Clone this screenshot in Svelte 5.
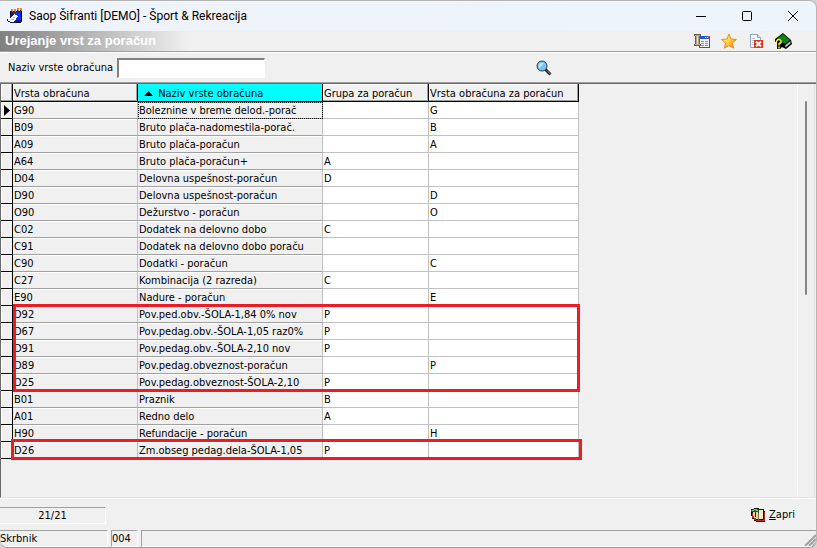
<script lang="ts">
  type Row = [string, string, string, string];

  const groups: { mark: string; rows: Row[] }[] = [
    {
      mark: '',
      rows: [
        ['G90', 'Boleznine v breme delod.-porač', '', 'G'],
        ['B09', 'Bruto plača-nadomestila-porač.', '', 'B'],
        ['A09', 'Bruto plača-poračun', '', 'A'],
        ['A64', 'Bruto plača-poračun+', 'A', ''],
        ['D04', 'Delovna uspešnost-poračun', 'D', ''],
        ['D90', 'Delovna uspešnost-poračun', '', 'D'],
        ['O90', 'Dežurstvo - poračun', '', 'O'],
        ['C02', 'Dodatek na delovno dobo', 'C', ''],
        ['C91', 'Dodatek na delovno dobo poraču', '', ''],
        ['C90', 'Dodatki - poračun', '', 'C'],
        ['C27', 'Kombinacija (2 razreda)', 'C', ''],
        ['E90', 'Nadure - poračun', '', 'E']
      ]
    },
    {
      mark: 'marked',
      rows: [
        ['D92', 'Pov.ped.obv.-ŠOLA-1,84 0% nov', 'P', ''],
        ['D67', 'Pov.pedag.obv.-ŠOLA-1,05 raz0%', 'P', ''],
        ['D91', 'Pov.pedag.obv.-ŠOLA-2,10 nov', 'P', ''],
        ['D89', 'Pov.pedag.obveznost-poračun', '', 'P'],
        ['D25', 'Pov.pedag.obveznost-ŠOLA-2,10', 'P', '']
      ]
    },
    {
      mark: '',
      rows: [
        ['B01', 'Praznik', 'B', ''],
        ['A01', 'Redno delo', 'A', ''],
        ['H90', 'Refundacije - poračun', '', 'H']
      ]
    },
    {
      mark: 'marked wide',
      rows: [['D26', 'Zm.obseg pedag.dela-ŠOLA-1,05', 'P', '']]
    }
  ];

  let query = $state('');
  let selected = $state('G90');
</script>

<div class="window">
  <header class="titlebar">
    <svg width="16" height="16" viewBox="0 0 16 16" shape-rendering="crispEdges">
      <path d="M3 3h12v11H10v1H5v-2H3z" fill="#0a1a9c" />
      <path d="M6 4h8v8H8V8H6z" fill="#1030e8" />
      <path d="M14 2h1v11h-1zM3 4h1v3H3zM9 14h5v1H9z" fill="#000" />
      <path d="M4 1h2v3H4zM7 1h2v3H7zM10 0h2v3h-2zM13 0h2v3h-2z" fill="#e88420" />
      <path d="M4 3h1v2H4zM7 3h1v2H7zM10 2h1v2h-1zM13 2h1v2h-1z" fill="#402000" />
      <path d="M0 11l3-1 4-4 4 2-3 5-5 2-3-2z" fill="#fff" />
      <path d="M0 11h1v2H0zM1 13h2v1H1zM3 14h2v1H3zM6 6h1v1H6zM4 8h1v1H4z" fill="#222" />
      <path d="M4 11h3v1H4zM6 9h2v1H6z" fill="#a8b8d0" />
    </svg>
    <h1>Saop Šifranti [DEMO] - Šport &amp; Rekreacija</h1>
    <div class="caption">
      <button aria-label="Minimize">
        <svg width="12" height="12" viewBox="0 0 12 12"><path d="M1 6.500h10" /></svg>
      </button>
      <button aria-label="Maximize">
        <svg width="12" height="12" viewBox="0 0 12 12"><rect x="1.500" y="1.500" width="9" height="9" rx="1" /></svg>
      </button>
      <button aria-label="Close">
        <svg width="12" height="12" viewBox="0 0 12 12"><path d="M1 1l10 10M11 1L1 11" /></svg>
      </button>
    </div>
  </header>

  <div class="heading">
    <h2>Urejanje vrst za poračun</h2>
    <div class="tools">
      <button aria-label="Form settings">
        <svg width="16" height="16" viewBox="0 0 16 16" shape-rendering="crispEdges">
          <path d="M5 3h11v12H5z" fill="#2454e0" />
          <path d="M6 6h9v8H6z" fill="#f4f6fc" />
          <path d="M11 4h1v1h-1zM13 4h1v1h-1z" fill="#fff" />
          <path d="M14 3h1v2h-1z" fill="#e05030" />
          <path d="M7 8h3v1H7zM11 8h3v1h-3zM7 10h3v1H7zM11 10h3v1h-3zM7 12h3v1H7zM11 12h3v1h-3z" fill="#8090a8" />
          <path d="M0 1h7v2H6v8h1v2H0v-2h1V3H0z" fill="#6c6048" />
          <path d="M1 2h5v1H1zM2 3h3v8H2zM1 11h5v1H1z" fill="#b8a888" />
          <path d="M3 3h1v8H3z" fill="#e8dcc0" />
        </svg>
      </button>
      <button aria-label="Favourites">
        <svg width="16" height="16" viewBox="0 0 16 16">
          <defs>
            <linearGradient id="star" x1="0" y1="0" x2="1" y2="1">
              <stop offset="0" stop-color="#fff8a0" />
              <stop offset="0.5" stop-color="#ffcf38" />
              <stop offset="1" stop-color="#f07a10" />
            </linearGradient>
          </defs>
          <path d="M8 1l2 5 5.400.500-4 3.700 1.200 5L8 12.500l-4.600 2.700 1.200-5-4-3.700L6 6z" fill="url(#star)" stroke="#e48a2c" />
        </svg>
      </button>
      <button aria-label="Close document">
        <svg width="16" height="16" viewBox="0 0 16 16">
          <path d="M2.500 1.500h7l3 3v10h-10z" fill="#f4f8ff" stroke="#8ea4cc" />
          <path d="M9.500 1.500v3h3" fill="#d4e0f4" stroke="#8ea4cc" />
          <path d="M4 5.500h3M4 7.500h2M4 9.500h1M4 11.500h1" stroke="#b4c6e4" />
          <path d="M6 7h9v8H6z" fill="#d83418" />
          <path d="M8 8.500l5 5M13 8.500l-5 5" stroke="#fff" stroke-width="2" />
        </svg>
      </button>
      <button aria-label="Help">
        <svg width="17" height="16" viewBox="0 0 17 16">
          <path d="M0 6l8-6 8 7 1 4-6 5-4-2-2 2H2V9H0z" fill="#000" />
          <path d="M2 6l6-5 7 6-5 4z" fill="#0a8414" />
          <path d="M10 12.500l5.500-4.500v2.500L10.500 14.500z" fill="#bcbcbc" />
          <path d="M1.500 9.500V8L3 6.500h1.500L6 8v1.500L4 11v1.500M4 13.500v2" fill="none" stroke="#f8ec10" stroke-width="1.600" />
        </svg>
      </button>
    </div>
  </div>

  <form class="search" onsubmit={(e) => e.preventDefault()}>
    <label for="query">Naziv vrste obračuna</label>
    <input id="query" type="text" bind:value={query} />
    <button aria-label="Search">
      <svg width="16" height="16" viewBox="0 0 16 16">
        <path d="M9.500 9.500l5 5" stroke="#222" stroke-width="3" />
        <path d="M11 10.500l3.500 3.500" stroke="#8c8c8c" />
        <circle cx="6" cy="6" r="5" fill="#7cc4ec" stroke="#24445c" />
        <path d="M3 6a3 3 0 0 1 3-3h2L3 8z" fill="#c8ecfc" />
      </svg>
    </button>
  </form>

  <main class="grid">
    <div class="rows">
      <table>
        <colgroup>
          <col class="c-mark" /><col class="c-code" /><col class="c-name" /><col class="c-group" /><col class="c-type" />
        </colgroup>
        <thead>
          <tr>
            <th></th>
            <th>Vrsta obračuna</th>
            <th class="sorted">
              <svg width="9" height="5" viewBox="0 0 9 5"><path d="M0 5l4.500-5L9 5z" /></svg>
              Naziv vrste obračuna
            </th>
            <th>Grupa za poračun</th>
            <th>Vrsta obračuna za poračun</th>
          </tr>
        </thead>
        {#each groups as group}
          <tbody class={group.mark}>
            {#each group.rows as [code, name, grp, type]}
              <tr class:selected={selected === code} onclick={() => (selected = code)}>
                <td class="indicator">
                  {#if selected === code}
                    <svg width="6" height="11" viewBox="0 0 6 11"><path d="M0 0l6 5.500L0 11z" /></svg>
                  {/if}
                </td>
                <td class="fixed">{code}</td>
                <td class="fixed name">{name}</td>
                <td>{grp}</td>
                <td>{type}</td>
              </tr>
            {/each}
          </tbody>
        {/each}
      </table>
    </div>
    <div class="scroll"><div class="thumb"></div></div>
  </main>

  <div class="actions">
    <div class="count">21/21</div>
    <button class="close">
      <svg width="16" height="16" viewBox="0 0 16 16" shape-rendering="crispEdges">
        <path d="M1 2h3V1h5v1h5v2h1v11H6v-1H4v-2H2V9H1z" fill="#1c0c08" />
        <path d="M2 6h2v5h2v2h8V5h1v9H6v-1H4v-2H2z" fill="#b03028" />
        <path d="M3 5h5v7H6v-1H4V9H3z" fill="#e0d49c" />
        <path d="M9 3h4v9H9z" fill="#f4ecc0" />
        <path d="M8 5h1v8H8z" fill="#807048" />
        <path d="M1 3h2V2h5v1h1v3H8V5H6v1H5V5H1z" fill="#1c5c34" />
        <path d="M4 2h3v1h1v1H6V3H4zM2 3h2v1H2z" fill="#78d890" />
        <path d="M5 6h1v4H5z" fill="#202020" />
      </svg>
      <span><u>Z</u>apri</span>
    </button>
  </div>

  <footer class="status">
    <div class="user">Skrbnik</div>
    <div class="code">004</div>
    <div class="rest">
      <svg width="12" height="12" viewBox="0 0 12 12">
        <path d="M1 12L12 1M5 12l7-7M9 12l3-3" stroke="#a0a0a0" stroke-width="2" />
      </svg>
    </div>
  </footer>
</div>

<style>
  :global(body) {
    margin: 0;
    background: #d4d4d4;
  }

  .window {
    display: flex;
    flex-direction: column;
    min-height: 100vh;
    box-sizing: border-box;
    border-right: 1px solid #b4b4b4;
    border-bottom: 1px solid #9a9a9a;
    border-top: 1px solid #b4b4b4;
    border-radius: 0 8px 8px 8px;
    overflow: hidden;
    background: #f0f0f0;
    color: #000;
    font: 11px/16px "DejaVu Sans Condensed", Tahoma, sans-serif;
  }

  h1,
  h2 {
    margin: 0;
  }

  button {
    display: flex;
    align-items: center;
    padding: 0;
    border: 0;
    background: none;
    color: inherit;
    font: inherit;
  }

  .titlebar {
    display: flex;
    align-items: center;
    gap: 6px;
    height: 30px;
    padding-left: 7px;
    background: linear-gradient(90deg, #eff3fb, #edf4fa);
  }

  h1 {
    flex: 1;
    font: 12px/16px Roboto, "Segoe UI", sans-serif;
  }

  .caption {
    display: flex;
  }

  .caption button {
    justify-content: center;
    width: 46px;
    height: 30px;
  }

  .caption svg {
    fill: none;
    stroke: #000;
  }

  .heading {
    display: flex;
    align-items: center;
    justify-content: space-between;
    height: 20px;
    padding: 0 24px 0 5px;
    background: linear-gradient(90deg, #808080, #f0f0f0 190px);
    border-bottom: 1px solid #a0a0a0;
  }

  h2 {
    color: #fff;
    font: bold 13px/20px "Liberation Sans", Arial, sans-serif;
  }

  .tools {
    display: flex;
    gap: 11px;
  }

  .search {
    display: flex;
    align-items: center;
    height: 29px;
    border-top: 1px solid #fff;
    border-bottom: 1px solid #a0a0a0;
    padding-left: 8px;
  }

  .search label {
    width: 109px;
    white-space: nowrap;
  }

  .search input {
    width: 148px;
    height: 20px;
    box-sizing: border-box;
    margin: 0 271px 0 0;
    padding: 0 3px;
    border: 1px solid #fff;
    border-top: 2px solid #808080;
    border-left: 2px solid #808080;
    background: #fff;
    font: inherit;
  }

  .grid {
    flex: 1;
    display: flex;
    border-top: 1px solid #696969;
    border-left: 1px solid #696969;
    border-bottom: 1px solid #e3e3e3;
  }

  .rows {
    flex: 1;
    border-right: 1px solid #fff;
  }

  table {
    width: 578px;
    table-layout: fixed;
    border-collapse: separate;
    border-spacing: 0;
  }

  .c-mark { width: 12px; }
  .c-code { width: 125px; }
  .c-name { width: 185px; }
  .c-group { width: 106px; }
  .c-type { width: 150px; }

  th,
  td {
    box-sizing: border-box;
    height: 17px;
    padding: 2px 1px 0;
    border-right: 1px solid #c0c0c0;
    border-bottom: 1px solid #c0c0c0;
    background: #fff;
    text-align: left;
    line-height: 14px;
    white-space: nowrap;
    overflow: hidden;
  }

  th {
    height: 18px;
    border-color: #000;
    background: #f0f0f0;
    font-weight: normal;
    box-shadow: inset -1px -1px #a0a0a0, inset 1px 1px #fff;
  }

  th.sorted {
    padding-left: 6px;
    background: #0ff;
    box-shadow: none;
  }

  .sorted svg {
    margin: 0 2px 1px 0;
  }

  .indicator {
    padding: 0 3px;
    border-color: #000;
    background: #f0f0f0;
    box-shadow: inset 1px 1px #fff;
  }

  .indicator svg {
    display: block;
  }

  .fixed {
    background: #f0f0f0;
    border-bottom-color: #a0a0a0;
    box-shadow: inset 0 1px #fff;
  }

  .selected .name {
    outline: 1px dotted #000;
    outline-offset: -1px;
    border-color: #f08030;
    box-shadow: inset 0 1px #f08030;
  }

  .marked {
    position: relative;
  }

  .marked::after {
    content: "";
    position: absolute;
    inset: -2px -1px -1px 12px;
    border: 3px solid #ed1c24;
    pointer-events: none;
  }

  .wide::after {
    inset: -3px -3px -1px 10px;
  }

  .scroll {
    width: 17px;
    padding-top: 17px;
    box-sizing: border-box;
    border-right: 1px solid #e3e3e3;
    margin-right: 1px;
  }

  .thumb {
    width: 2px;
    height: 194px;
    margin-left: 7px;
    border-radius: 1px;
    background: #858585;
  }

  .actions {
    display: flex;
    justify-content: space-between;
    align-items: center;
    height: 31px;
    border-top: 1px solid #fff;
    padding-right: 21px;
  }

  .count {
    width: 106px;
    box-sizing: border-box;
    margin-top: 2px;
    border: 1px solid #fff;
    border-top-color: #a0a0a0;
    border-left: 0;
    line-height: 15px;
    text-align: center;
  }

  .close {
    gap: 3px;
    padding-top: 1px;
  }

  .status {
    display: flex;
    gap: 3px;
    height: 17px;
  }

  .status div {
    height: 17px;
    box-sizing: border-box;
    border: 1px solid #a0a0a0;
    border-right-color: #fff;
    border-bottom-color: #fff;
  }

  .user {
    width: 108px;
  }

  .status .user {
    border-left: 0;
  }

  .code {
    width: 27px;
  }

  .status .rest {
    flex: 1;
    display: flex;
    align-items: flex-end;
    justify-content: flex-end;
    border-right: 0;
  }
</style>
